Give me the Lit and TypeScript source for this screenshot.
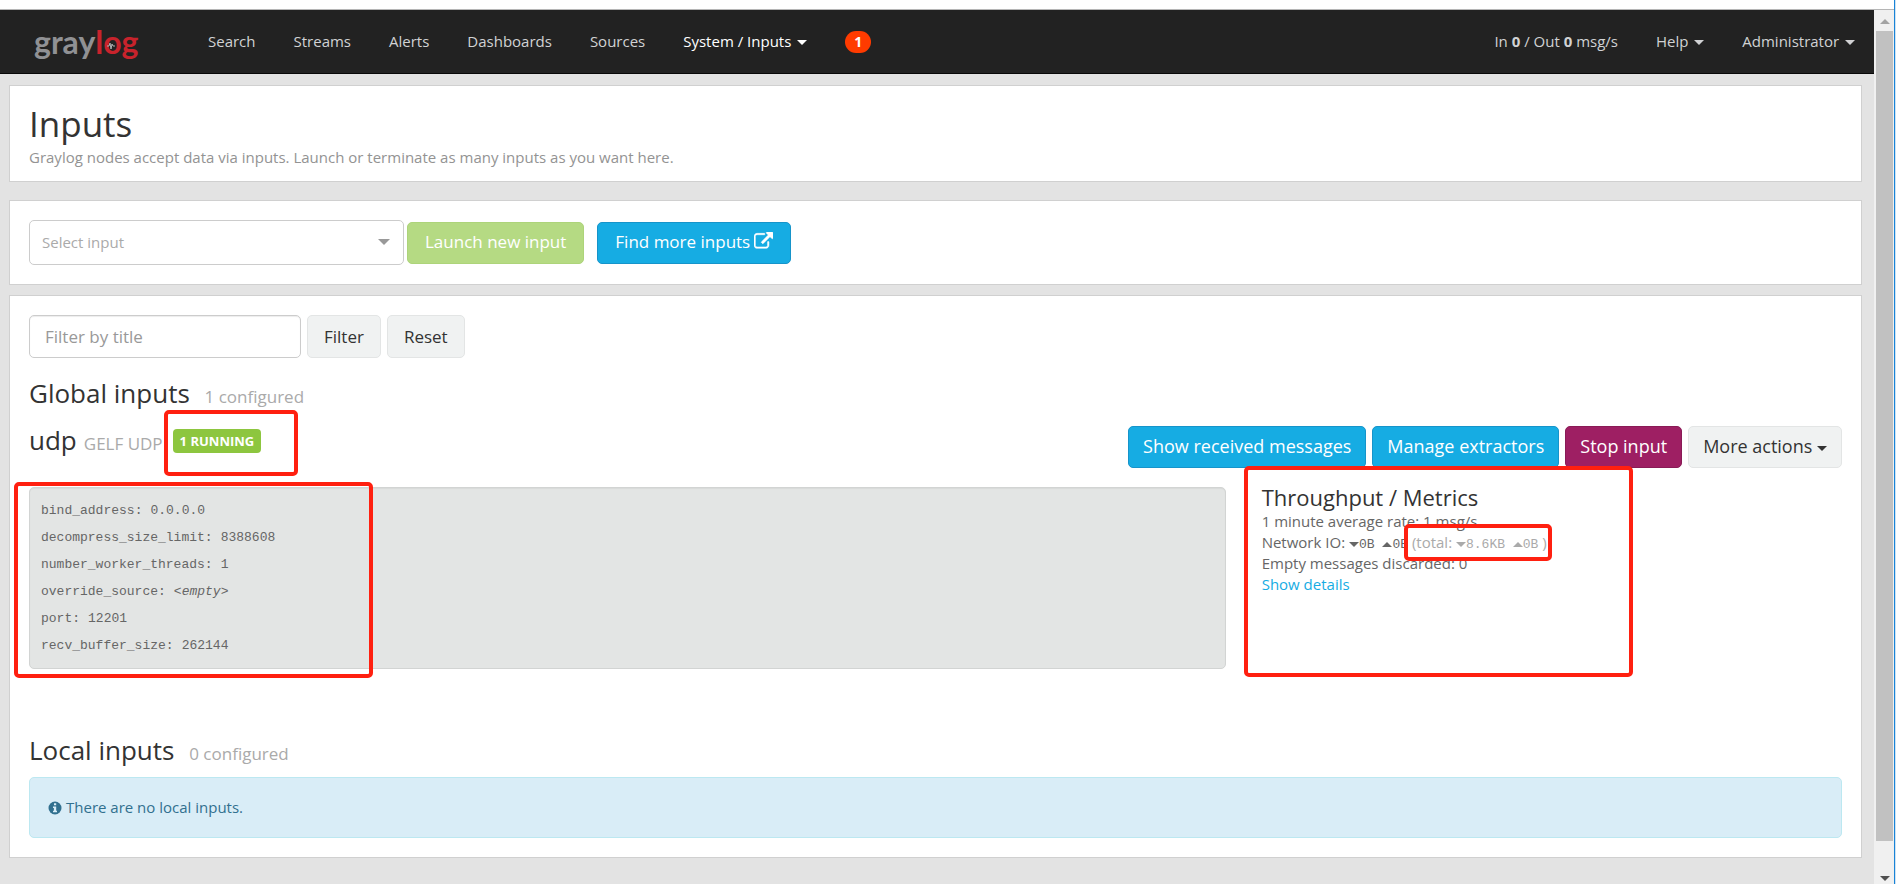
import { LitElement, html, css } from "lit";
import { customElement, property } from "lit/decorators.js";

const base = css`
  *, *::before, *::after { box-sizing: border-box; }
  a { color: inherit; text-decoration: none; }
  h1, h2, h3, h4, p, ul, dl, dd, pre { margin: 0; padding: 0; font-weight: 400; }
  button, input, select { font-family: inherit; margin: 0; }
  .caret {
    display: inline-block;
    border: 5px solid transparent;
    border-top-color: currentColor;
    border-bottom: 0;
    vertical-align: middle;
  }
`;

@customElement("gl-navbar")
class GlNavbar extends LitElement {
  static styles = [base, css`
    :host { display: block; }
    .bar {
      display: flex;
      align-items: flex-start;
      height: 64px;
      background: #222;
      border-bottom: 1px solid #080808;
      color: #d1d2d4;
      font-size: 15px;
      line-height: 20px;
    }
    .logo { display: block; margin: 6px 0 0 32px; width: 120px; height: 52px; }
    .logo text { font-family: Lato, sans-serif; font-weight: 700; font-size: 32px; }
    .gray { fill: #909194; }
    .red { fill: #c8232c; }
    .pulse { fill: none; stroke: #b0b1b4; stroke-width: 1; }
    .menu { display: flex; list-style: none; padding-top: 21px; }
    .main { margin-left: 37px; }
    .side { margin-left: auto; }
    .menu li { padding: 0 19px; }
    .active { color: #fff; }
    .caret { margin-left: 2px; }
    .badge {
      display: block;
      min-width: 26px;
      height: 22px;
      border-radius: 11px;
      background: #ff3b00;
      color: #fff;
      font-size: 14px;
      font-weight: 700;
      line-height: 22px;
      text-align: center;
    }
  `];

  render() {
    const links = ["Search", "Streams", "Alerts", "Dashboards", "Sources"];
    return html`
      <nav class="bar" aria-label="Main">
        <a href="#" aria-label="graylog">
          <svg class="logo" viewBox="0 0 120 52">
            <text x="2" y="38"><tspan class="gray">gray</tspan><tspan class="red">log</tspan></text>
            <polyline class="pulse" points="75,30 77,30 78,27 79,33 80,28 81,30 83,30" />
          </svg>
        </a>
        <ul class="menu main">
          ${links.map((l) => html`<li><a href="#">${l}</a></li>`)}
          <li><a class="active" href="#">System / Inputs <span class="caret"></span></a></li>
          <li><a class="badge" href="#">1</a></li>
        </ul>
        <ul class="menu side">
          <li><a href="#">In <b>0</b> / Out <b>0</b> msg/s</a></li>
          <li><a href="#">Help <span class="caret"></span></a></li>
          <li><a href="#">Administrator <span class="caret"></span></a></li>
        </ul>
      </nav>`;
  }
}

@customElement("gl-input-row")
class GlInputRow extends LitElement {
  @property({ attribute: false }) config: [string, string][] = [];

  static styles = [base, css`
    :host { display: block; }
    .head { display: flex; justify-content: space-between; align-items: flex-start; margin-top: 12px; }
    .title { display: flex; align-items: baseline; font-size: 26px; line-height: 28px; color: #333; }
    .title small { margin-left: 7px; font-size: 17px; color: #aaa; }
    .label {
      position: relative;
      align-self: flex-start;
      margin: 3px 0 0 10px;
      padding: 0 7px;
      border-radius: 4px;
      background: #8dc63f;
      color: #fff;
      font-size: 13px;
      font-weight: 700;
      line-height: 24px;
    }
    .actions { display: flex; gap: 6px; }
    .btn {
      height: 42px;
      padding: 0 14px 2px;
      border: 1px solid #1694ca;
      border-radius: 5px;
      background: #16ace3;
      color: #fff;
      font-size: 18px;
    }
    .stop { background: #9e1f63; border-color: #891b56; }
    .more { background: #f0f2f2; border-color: #e3e5e5; color: #333; }
    .row { display: flex; margin: 19px -18px 0; }
    .wide { position: relative; width: 66.6667%; padding: 0 18px; }
    .narrow { position: relative; width: 33.3333%; padding: 0 18px; }
    .well {
      padding: 9px 11px;
      border: 1px solid #d2d4d3;
      border-radius: 5px;
      background: #e3e5e4;
      box-shadow: inset 0 1px 1px rgba(0, 0, 0, 0.05);
      color: #666;
      font: 13px/27px "Liberation Mono", monospace;
    }
    .pair { display: flex; gap: 8px; }
    .metrics { color: #666; font-size: 15px; line-height: 21px; }
    .metrics h3 { padding-bottom: 4px; color: #333; font-size: 22px; line-height: 20px; }
    .mono { font: 13px "Liberation Mono", monospace; }
    .total { position: relative; color: #aaa; }
    .link { color: #16ace3; }
    .down, .up { display: inline-block; border: 5px solid transparent; vertical-align: middle; }
    .down { border-top-color: currentColor; border-bottom: 0; }
    .up { border-bottom-color: currentColor; border-top: 0; }
    .mark { position: absolute; border: 4px solid #ff2010; border-radius: 5px; pointer-events: none; }
    .mark-label { left: -9px; top: -19px; width: 134px; height: 66px; }
    .mark-config { left: 3px; top: -5px; width: 359px; height: 196px; }
    .mark-metrics { left: 0; top: -21px; width: 389px; height: 211px; }
    .mark-total { left: -8px; top: -8px; width: 148px; height: 37px; }
  `];

  render() {
    return html`
      <div class="head">
        <h3 class="title">udp <small>GELF UDP</small>
          <span class="label">1 RUNNING<span class="mark mark-label"></span></span>
        </h3>
        <div class="actions">
          <button class="btn">Show received messages</button>
          <button class="btn">Manage extractors</button>
          <button class="btn stop">Stop input</button>
          <button class="btn more">More actions <span class="caret"></span></button>
        </div>
      </div>
      <div class="row">
        <div class="wide">
          <dl class="well">
            ${this.config.map(([k, v]) => html`
              <div class="pair"><dt>${k}:</dt><dd>${v ? v : html`<i>&lt;empty&gt;</i>`}</dd></div>`)}
          </dl>
          <span class="mark mark-config"></span>
        </div>
        <div class="narrow">
          <div class="metrics">
            <h3>Throughput / Metrics</h3>
            <p>1 minute average rate: 1 msg/s</p>
            <p>Network IO: <span class="mono"><span class="down"></span>0B <span class="up"></span>0B</span>
              <span class="total">(total: <span class="mono"><span class="down"></span>8.6KB <span class="up"></span>0B</span> )<span class="mark mark-total"></span></span></p>
            <p>Empty messages discarded: 0</p>
            <a class="link" href="#">Show details</a>
          </div>
          <span class="mark mark-metrics"></span>
        </div>
      </div>`;
  }
}

@customElement("app-root")
class AppRoot extends LitElement {
  static styles = [base, css`
    :host {
      display: flex;
      min-height: 100vh;
      background: #e3e3e3;
      color: #333;
      font-family: "Open Sans", sans-serif;
      font-size: 15px;
    }
    .window { flex: 1; min-width: 0; display: flex; flex-direction: column; }
    .chrome { height: 10px; background: #fff; border-bottom: 1px solid #b5b5b5; }
    .view { flex: 1; display: flex; }
    .page { flex: 1; min-width: 0; }
    .content { padding: 11px 12px 24px 9px; }
    .box { padding: 19px; border: 1px solid #d0d0d0; background: #fff; }
    .intro { padding: 15px 19px 13px; margin-bottom: 18px; }
    .intro h1 { font-size: 35px; line-height: 45px; }
    .intro p { color: #939393; line-height: 22px; }
    .launch { display: flex; align-items: center; margin-bottom: 10px; }
    .picker {
      width: 375px;
      height: 45px;
      padding: 0 12px 2px;
      border: 1px solid #ccc;
      border-radius: 5px;
      appearance: none;
      background: #fff;
      color: #aaa;
      font-size: 15px;
    }
    .select { position: relative; }
    .arrow {
      position: absolute;
      right: 14px;
      top: 19px;
      border: 6px solid transparent;
      border-top-color: #999;
      border-bottom: 0;
      pointer-events: none;
    }
    .btn {
      display: inline-flex;
      align-items: center;
      height: 42px;
      padding: 0 16px;
      border: 1px solid #e3e5e5;
      border-radius: 5px;
      background: #f0f2f2;
      color: #333;
      font-size: 17px;
    }
    .launch .btn { padding: 0 17px 2px; color: #fff; }
    .green { margin-left: 3px; background: #b5da83; border-color: #add47a; }
    .blue { margin-left: 13px; background: #16ace3; border-color: #1694ca; }
    .ext { width: 19px; height: 19px; margin-left: 4px; fill: currentColor; }
    .filter { display: flex; gap: 6px; }
    .filter input {
      width: 272px;
      height: 43px;
      padding: 0 15px;
      border: 1px solid #ccc;
      border-radius: 5px;
      box-shadow: inset 0 1px 1px rgba(0, 0, 0, 0.075);
      font-size: 17px;
    }
    .filter input::placeholder { color: #999; }
    .filter .btn { height: 43px; }
    h2 { font-size: 26px; line-height: 34px; }
    h2 small { margin-left: 8px; font-size: 17px; color: #aaa; }
    .global { margin-top: 18px; }
    .local { margin-top: 64px; }
    .alert {
      display: flex;
      align-items: center;
      gap: 4px;
      margin-top: 6px;
      padding: 19px 18px;
      border: 1px solid #bce8f1;
      border-radius: 5px;
      background: #d9edf7;
      color: #31708f;
      line-height: 21px;
    }
    .info { width: 14px; height: 14px; }
    .track {
      display: flex;
      flex-direction: column;
      align-items: center;
      width: 20px;
      padding: 9px 1px 3px 2px;
      background: #f0f0f0;
    }
    .thumb { flex: 1; align-self: stretch; margin: 7px 0 35px; background: #c1c1c1; }
    .tri { border: 5px solid transparent; }
    .tri-up { border-bottom-color: #a3a3a3; border-top: 0; }
    .tri-down { border-top-color: #505050; border-bottom: 0; }
    .edge { width: 2px; border-left: 1px solid #1883d7; background: #cfe3f3; }
  `];

  private config: [string, string][] = [
    ["bind_address", "0.0.0.0"],
    ["decompress_size_limit", "8388608"],
    ["number_worker_threads", "1"],
    ["override_source", ""],
    ["port", "12201"],
    ["recv_buffer_size", "262144"],
  ];

  render() {
    return html`
      <div class="window">
        <div class="chrome"></div>
        <div class="view">
          <div class="page">
            <gl-navbar></gl-navbar>
            <main class="content">
              <section class="box intro">
                <h1>Inputs</h1>
                <p>Graylog nodes accept data via inputs. Launch or terminate as many inputs as you want here.</p>
              </section>
              <section class="box launch">
                <div class="select">
                  <select class="picker" aria-label="Select input"><option>Select input</option></select>
                  <span class="arrow"></span>
                </div>
                <button class="btn green">Launch new input</button>
                <a class="btn blue" href="#">Find more inputs
                  <svg class="ext" viewBox="0 0 1792 1792"><path d="M1408 928v320q0 119-84.500 203.500t-203.500 84.500h-832q-119 0-203.500-84.500t-84.500-203.500v-832q0-119 84.500-203.500t203.500-84.500h704q14 0 23 9t9 23v64q0 14-9 23t-23 9h-704q-66 0-113 47t-47 113v832q0 66 47 113t113 47h832q66 0 113-47t47-113v-320q0-14 9-23t23-9h64q14 0 23 9t9 23zm384-864v512q0 26-19 45t-45 19-45-19l-176-176-652 652q-10 10-23 10t-23-10l-114-114q-10-10-10-23t10-23l652-652-176-176q-19-19-19-45t19-45 45-19h512q26 0 45 19t19 45z" stroke="currentColor" stroke-width="50"/></svg>
                </a>
              </section>
              <section class="box">
                <form class="filter">
                  <input type="text" placeholder="Filter by title" aria-label="Filter by title" />
                  <button type="button" class="btn">Filter</button>
                  <button type="button" class="btn">Reset</button>
                </form>
                <h2 class="global">Global inputs <small>1 configured</small></h2>
                <gl-input-row .config=${this.config}></gl-input-row>
                <h2 class="local">Local inputs <small>0 configured</small></h2>
                <div class="alert">
                  <svg class="info" viewBox="0 0 14 14"><circle cx="7" cy="7" r="6.500" fill="#31708f"/><path fill="#d9edf7" d="M6 2.200h2.200v2H6zM5 5.500h3.200v4.300H9v1.500H5V9.800h.9V7H5z"/></svg>
                  <span>There are no local inputs.</span>
                </div>
              </section>
            </main>
          </div>
          <div class="track" aria-hidden="true">
            <span class="tri tri-up"></span>
            <span class="thumb"></span>
            <span class="tri tri-down"></span>
          </div>
        </div>
      </div>
      <div class="edge"></div>`;
  }
}
